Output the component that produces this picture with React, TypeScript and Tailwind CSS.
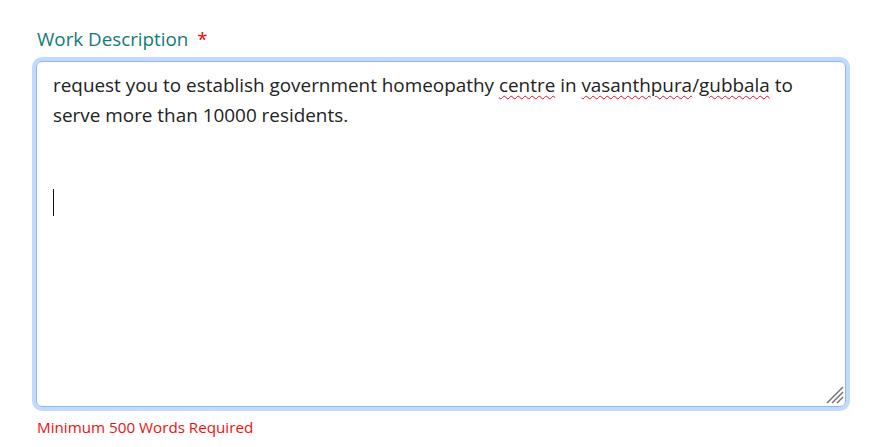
import React from "react";

const firstLine = "request you to establish government homeopathy ";

function Squiggle({ children }: { children: React.ReactNode }) {
  return (
    <span className="underline decoration-wavy decoration-[#e81123] decoration-1 underline-offset-[3px]">
      {children}
    </span>
  );
}

function ResizeGrip() {
  return (
    <svg
      className="pointer-events-none absolute bottom-[2px] right-[1px]"
      width="18"
      height="18"
      viewBox="0 0 18 18"
    >
      <g stroke="#6f6f6f" strokeWidth="1.4">
        <line x1="17" y1="1" x2="1" y2="17" />
        <line x1="17" y1="6" x2="6" y2="17" />
        <line x1="17" y1="11" x2="11" y2="17" />
      </g>
    </svg>
  );
}

export default function App() {
  return (
    <div className="min-h-screen bg-white px-[32px] pt-[26px] font-['Segoe_UI','Open_Sans',sans-serif]">
      <label className="flex items-center gap-[9px] pl-[5px] text-[18.8px] leading-[26px] text-[#137a78]">
        Work Description
        <span className="text-[#ff0000]">*</span>
      </label>

      <div className="mt-[5px] w-[818px] rounded-[10px] border-4 border-[#c2dbfd]">
        <div className="relative h-[346px] rounded-[6px] border border-[#8db7f5] bg-white px-[16px] pt-[9px] text-[18.9px] leading-[29.6px] text-[#222]">
          <p>
            {firstLine}
            <Squiggle>centre</Squiggle> in <Squiggle>vasanthpura</Squiggle>/
            <Squiggle>gubbala</Squiggle> to
            <br />
            serve more than 10000 residents.
          </p>
          <div className="mt-[59px] h-[27px] w-px bg-[#111]" />
          <ResizeGrip />
        </div>
      </div>

      <p className="mt-[6px] pl-[5px] text-[15.2px] leading-[20px] text-[#f01010]">
        Minimum 500 Words Required
      </p>
    </div>
  );
}
